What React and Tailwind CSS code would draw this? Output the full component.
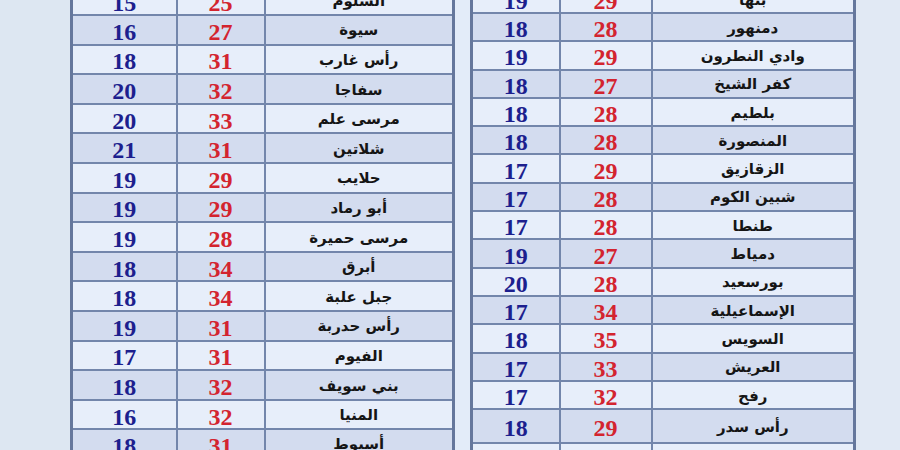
const left = [
  ['15', '25', 'السلوم'],
  ['16', '27', 'سيوة'],
  ['18', '31', 'رأس غارب'],
  ['20', '32', 'سفاجا'],
  ['20', '33', 'مرسى علم'],
  ['21', '31', 'شلاتين'],
  ['19', '29', 'حلايب'],
  ['19', '29', 'أبو رماد'],
  ['19', '28', 'مرسى حميرة'],
  ['18', '34', 'أبرق'],
  ['18', '34', 'جبل علبة'],
  ['19', '31', 'رأس حدربة'],
  ['17', '31', 'الفيوم'],
  ['18', '32', 'بني سويف'],
  ['16', '32', 'المنيا'],
  ['18', '31', 'أسيوط'],
]

const right = [
  ['19', '29', 'بنها'],
  ['18', '28', 'دمنهور'],
  ['19', '29', 'وادي النطرون'],
  ['18', '27', 'كفر الشيخ'],
  ['18', '28', 'بلطيم'],
  ['18', '28', 'المنصورة'],
  ['17', '29', 'الزقازيق'],
  ['17', '28', 'شبين الكوم'],
  ['17', '28', 'طنطا'],
  ['19', '27', 'دمياط'],
  ['20', '28', 'بورسعيد'],
  ['17', '34', 'الإسماعيلية'],
  ['18', '35', 'السويس'],
  ['17', '33', 'العريش'],
  ['17', '32', 'رفح'],
  ['18', '29', 'رأس سدر'],
  ['', '', ''],
]

function TempTable({ rows, widths, rowH, className }) {
  return (
    <table className={`border-collapse table-fixed border-[3px] border-[#65779c] ${className}`}>
      <colgroup>
        {widths.map((w, i) => (
          <col key={i} style={{ width: w }} />
        ))}
      </colgroup>
      <tbody>
        {rows.map(([min, max, city], i) => (
          <tr
            key={i}
            style={{ height: rowH(i) }}
            className={i % 2 ? 'bg-[#d3dcef]' : 'bg-[#e7eefa]'}
          >
            <td className="border-2 border-[#7386ab] p-0 pt-1 text-center text-[24px] leading-[22px] font-bold text-[#1d1f8e] font-['Liberation_Serif',serif]">
              {min}
            </td>
            <td className="border-2 border-[#7386ab] p-0 pt-1 text-center text-[24px] leading-[22px] font-bold text-[#d3242f] font-['Liberation_Serif',serif]">
              {max}
            </td>
            <td
              dir="rtl"
              className="border-2 border-[#7386ab] p-0 pt-0.5 text-center text-[15px] leading-none font-bold text-[#151515] font-['DejaVu_Sans',sans-serif]"
            >
              {city}
            </td>
          </tr>
        ))}
      </tbody>
    </table>
  )
}

export default function App() {
  return (
    <div className="w-[900px] h-[450px] overflow-hidden bg-[#dde7f2] flex items-start">
      <div className="w-[70px] shrink-0" />
      <TempTable
        rows={left}
        widths={['105px', '88px', '189px']}
        rowH={() => '29.6px'}
        className="w-[383px] shrink-0 -mt-[16px]"
      />
      <div className="w-[15px] h-[450px] shrink-0 bg-[#e3ecf9]" />
      <TempTable
        rows={right}
        widths={['88px', '92px', '203px']}
        rowH={(i) => (i === 15 ? '34px' : '28.3px')}
        className="w-[384px] shrink-0 -mt-[17px]"
      />
      <div className="flex-1 h-[450px] bg-[#e1e9f4]" />
    </div>
  )
}
